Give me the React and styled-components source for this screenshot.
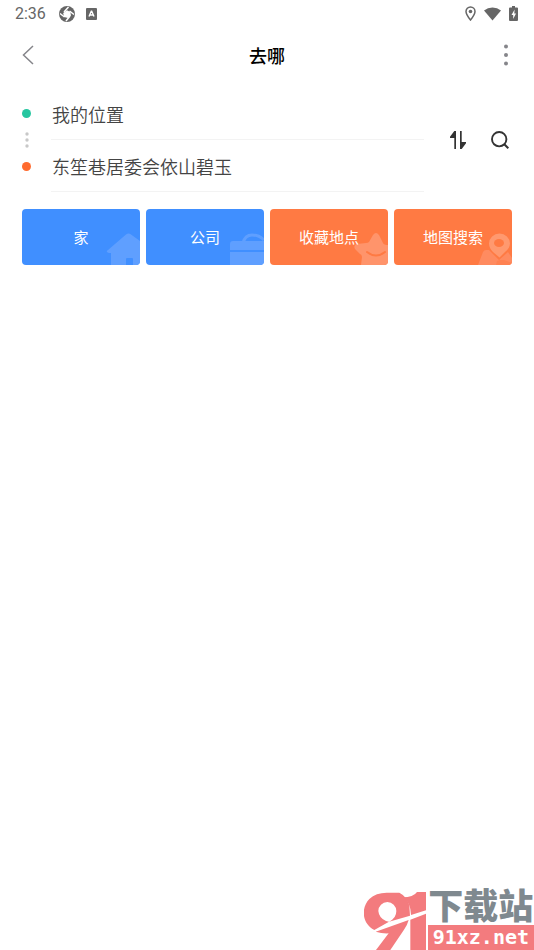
import React, { useState } from "react";
import styled, { createGlobalStyle } from "styled-components";

const GlobalStyle = createGlobalStyle`
  * {
    box-sizing: border-box;
  }
  body {
    margin: 0;
    background: #fff;
    color: #333;
    font-family: "Liberation Sans", "Noto Sans CJK SC", sans-serif;
  }
  button, input {
    font-family: inherit;
  }
`;

const Page = styled.div`
  display: flex;
  flex-direction: column;
  min-height: 100vh;
`;

const StatusBar = styled.div`
  display: flex;
  align-items: center;
  justify-content: space-between;
  height: 27px;
  padding: 0 16px 0 15px;
  color: #666;
`;

const StatusGroup = styled.div`
  display: flex;
  align-items: center;
  gap: ${props => props.$gap}px;
`;

const Clock = styled.span`
  margin-right: 2px;
  font-family: Roboto, sans-serif;
  font-size: 16px;
  line-height: 28px;
`;

const Header = styled.header`
  display: flex;
  align-items: center;
  justify-content: space-between;
  height: 55px;
  padding: 0 18px;
`;

const Title = styled.h1`
  margin: 0;
  color: #000;
  font-family: "Noto Sans CJK SC", sans-serif;
  font-size: 18px;
  font-weight: 500;
  line-height: 24px;
`;

const IconButton = styled.button`
  display: flex;
  align-items: center;
  justify-content: center;
  width: 20px;
  height: 24px;
  padding: 0;
  border: 0;
  background: none;
  color: ${props => props.$color || "#333"};
  cursor: pointer;
`;

const RoutePanel = styled.section`
  display: flex;
  align-items: center;
  padding: 6px 22px 0;
`;

const Markers = styled.div`
  display: flex;
  flex-direction: column;
  align-items: center;
  justify-content: space-between;
  height: 62px;
  margin-right: 20px;
`;

const Dot = styled.span`
  width: 9px;
  height: 9px;
  border-radius: 50%;
  background: ${props => props.$color};
`;

const Fields = styled.div`
  flex: 1;
  min-width: 0;
`;

const Field = styled.input`
  display: block;
  width: 100%;
  height: 52px;
  padding: 0 1px;
  border: 0;
  border-bottom: 1px solid #f3f3f3;
  outline: none;
  background: none;
  color: #444;
  font-size: 18px;
  font-weight: 350;
`;

const Actions = styled.div`
  display: flex;
  gap: 22px;
  margin: 0 2px 0 24px;
`;

const Shortcuts = styled.nav`
  display: grid;
  grid-template-columns: repeat(4, 1fr);
  gap: 6px;
  padding: 17px 22px;
`;

const Shortcut = styled.button`
  position: relative;
  height: 56px;
  padding: 0 0 2px;
  overflow: hidden;
  border: 0;
  border-radius: 4px;
  background: ${props => props.$color};
  color: #fff;
  font-size: 15px;
  cursor: pointer;

  svg {
    position: absolute;
    right: 0;
    bottom: 0;
  }
  span {
    position: relative;
  }
`;

const Footer = styled.footer`
  display: flex;
  justify-content: flex-end;
  align-items: flex-end;
  margin-top: auto;
`;

const SiteName = styled.div`
  display: flex;
  flex-direction: column;
`;

const SiteTitle = styled.strong`
  color: #7f898f;
  font-size: 35px;
  font-weight: 900;
  line-height: 36px;
  text-align: center;
`;

const SiteUrl = styled.strong`
  height: 25px;
  padding: 0 5px;
  background: #f37b7e;
  color: #fff;
  font-family: "DejaVu Sans Mono", monospace;
  font-size: 20px;
  line-height: 25px;
`;

const AppGlyph = () => (
  <svg width="16" height="16" viewBox="0 0 16 16">
    <circle cx="8" cy="8" r="8" fill="currentColor" />
    <path d="M8 4.2 11.3 6 12 9.5 9 12 5 11 4.2 7Z" fill="#fff" />
    <path d="M5 6 9.5 1M10.5 5 15 8.5M11 10 7 15M5.5 11 1 7.5" stroke="#fff" strokeWidth="1.5" fill="none" />
  </svg>
);

const InputGlyph = () => (
  <svg width="11" height="12" viewBox="0 0 11 12">
    <rect width="11" height="12" rx="1" fill="currentColor" />
    <path d="m3 8.5 2.3-5.2h.4L8 8.5M4 7h3" stroke="#fff" strokeWidth="1.4" fill="none" />
  </svg>
);

const PinGlyph = () => (
  <svg width="11" height="15" viewBox="0 0 11 15">
    <path d="M5.5 1A4.5 4.5 0 0 0 1 5.5C1 8.5 5.5 14 5.5 14S10 8.5 10 5.5A4.5 4.5 0 0 0 5.5 1Z" fill="none" stroke="currentColor" strokeWidth="1.5" />
    <circle cx="5.5" cy="5.5" r="1.8" fill="currentColor" />
  </svg>
);

const WifiGlyph = () => (
  <svg width="17" height="14" viewBox="0 0 18 14">
    <path d="M9 14 0 3.2Q4 0 9 0t9 3.2Z" fill="currentColor" />
  </svg>
);

const BatteryGlyph = () => (
  <svg width="9" height="15" viewBox="0 0 9 15">
    <path d="M3 0h3v1.5h2q1 0 1 1V14q0 1-1 1H1q-1 0-1-1V2.5q0-1 1-1h2Z" fill="currentColor" />
    <path d="M5.6 3.5 2.5 9h1.7v4L7 7.5H5.3Z" fill="#fff" />
  </svg>
);

const BackIcon = () => (
  <svg width="12" height="20" viewBox="0 0 12 20">
    <path d="M11 1 1.5 10l9.5 9" fill="none" stroke="currentColor" strokeWidth="1.5" />
  </svg>
);

const MoreIcon = () => (
  <svg width="4" height="22" viewBox="0 0 4 22">
    <circle cx="2" cy="2.5" r="2" fill="currentColor" />
    <circle cx="2" cy="11" r="2" fill="currentColor" />
    <circle cx="2" cy="19.5" r="2" fill="currentColor" />
  </svg>
);

const RouteDots = () => (
  <svg width="4" height="16" viewBox="0 0 4 16">
    <circle cx="2" cy="2" r="1.7" fill="#c8c8c8" />
    <circle cx="2" cy="8" r="1.7" fill="#c8c8c8" />
    <circle cx="2" cy="14" r="1.7" fill="#c8c8c8" />
  </svg>
);

const SwapIcon = () => (
  <svg width="16" height="18" viewBox="0 0 16 18">
    <path d="M4.3 0H6v18H4.3V7H0V5.8ZM10 0h1.7v11H16v1.2L11.7 18H10Z" fill="currentColor" />
  </svg>
);

const SearchIcon = () => (
  <svg width="18" height="18" viewBox="0 0 18 18">
    <circle cx="8.2" cy="8.2" r="7.2" fill="none" stroke="currentColor" strokeWidth="1.9" />
    <path d="m13.3 13.3 4 4" stroke="currentColor" strokeWidth="2" />
  </svg>
);

const HomeArt = () => (
  <svg width="34" height="32" viewBox="0 0 34 32" fill="#5f9fff">
    <path d="M2 17 20 1.5q2.5-2 5 0L34 8v24h-7v-6q0-1-1-1h-5q-1 0-1 1v6H5V20H3q-4-1-1-3Z" />
  </svg>
);

const CaseArt = () => (
  <svg width="34" height="32" viewBox="0 0 34 32">
    <path d="M13 10Q15 2 22 2t12 5" fill="none" stroke="#5f9fff" strokeWidth="3" />
    <path d="M0 17v-6q0-3 3-3h31v9ZM0 19h34v13H0Z" fill="#5f9fff" />
  </svg>
);

const StarArt = () => (
  <svg width="34" height="32" viewBox="0 0 34 32">
    <path d="M19 2q3-4 6 0l4 8q1 2 5 2v20H7l1-8q0-2-2-3l-5-5q-2-4 2-5l9-1q2 0 3-1Z" fill="#ff946b" />
    <path d="M13 19q9 7 18 0" fill="none" stroke="#ff7a43" strokeWidth="2" strokeLinecap="round" />
  </svg>
);

const MapArt = () => (
  <svg width="34" height="32" viewBox="0 0 34 32">
    <path d="M0 32 5 19q1-2 3-2h3l10 10 9-8 4 6v7Z" fill="#ff8b60" />
    <path d="m18 32 1-4 3-1h4l8 3v2Z" fill="#ff7a43" opacity="0.5" />
    <path d="M21.5 0.5A10.5 10 0 0 1 32 10.5Q32 15 27 19L21.5 24.5 15 19Q11 15 11 10.5A10.5 10 0 0 1 21.5 0.5Z" fill="#ff996f" />
    <ellipse cx="21" cy="10" rx="5" ry="4" fill="#ff7a43" />
  </svg>
);

const SiteMark = () => (
  <svg width="64" height="59" viewBox="12 15 192 177">
    <path fillRule="evenodd" fill="#f37b7e" d="M80 20H118Q140 31 148 58L150 89 87 107Q109 97 109 75A27 27 0 0 0 55 75Q57 96 78 105L87 107 43 132C2 110 5 62 28 39Q48 20 80 20Z" />
    <path d="M128 34q32 0 43-16h27v55l-45 14q0-35-25-53ZM151 101l47-18v109h-47Z" fill="#f37b7e" />
    <path d="m85 124 61-22q-4 16-15 31l-40 59H48l38-50q-20 1-39-5Z" fill="#f37b7e" />
  </svg>
);

const shortcuts = [
  { label: "家", color: "#408fff", art: <HomeArt /> },
  { label: "公司", color: "#408fff", art: <CaseArt /> },
  { label: "收藏地点", color: "#ff7a43", art: <StarArt /> },
  { label: "地图搜索", color: "#ff7a43", art: <MapArt /> },
];

export default function App() {
  const [start, setStart] = useState("我的位置");
  const [end, setEnd] = useState("东笙巷居委会依山碧玉");

  const swap = () => {
    setStart(end);
    setEnd(start);
  };

  return (
    <Page>
      <GlobalStyle />
      <StatusBar>
        <StatusGroup $gap={11}>
          <Clock>2:36</Clock>
          <AppGlyph />
          <InputGlyph />
        </StatusGroup>
        <StatusGroup $gap={8}>
          <PinGlyph />
          <WifiGlyph />
          <BatteryGlyph />
        </StatusGroup>
      </StatusBar>

      <Header>
        <IconButton $color="#85858a" aria-label="返回"><BackIcon /></IconButton>
        <Title>去哪</Title>
        <IconButton $color="#85858a" aria-label="更多"><MoreIcon /></IconButton>
      </Header>

      <main>
        <RoutePanel>
          <Markers>
            <Dot $color="#26c6a0" />
            <RouteDots />
            <Dot $color="#ff6b2f" />
          </Markers>
          <Fields>
            <Field aria-label="起点" value={start} onChange={e => setStart(e.target.value)} />
            <Field aria-label="终点" value={end} onChange={e => setEnd(e.target.value)} />
          </Fields>
          <Actions>
            <IconButton aria-label="交换" onClick={swap}><SwapIcon /></IconButton>
            <IconButton aria-label="搜索"><SearchIcon /></IconButton>
          </Actions>
        </RoutePanel>

        <Shortcuts>
          {shortcuts.map(item => (
            <Shortcut key={item.label} $color={item.color}>
              {item.art}
              <span>{item.label}</span>
            </Shortcut>
          ))}
        </Shortcuts>
      </main>

      <Footer>
        <SiteMark />
        <SiteName>
          <SiteTitle>下载站</SiteTitle>
          <SiteUrl>91xz.net</SiteUrl>
        </SiteName>
      </Footer>
    </Page>
  );
}
